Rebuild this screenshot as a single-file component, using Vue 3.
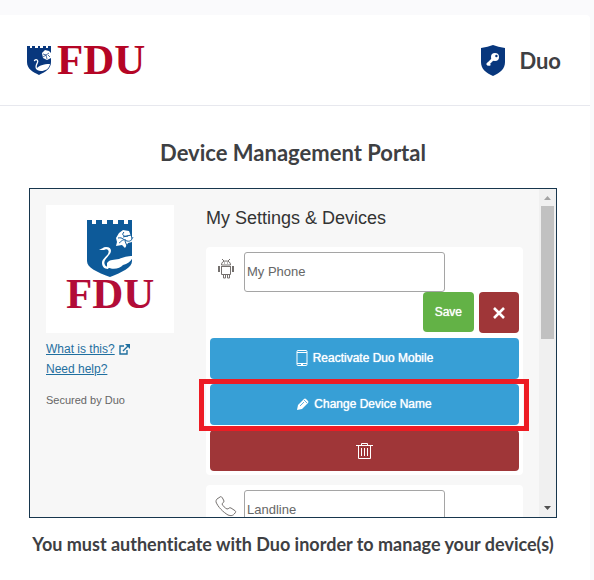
<script setup>
import { reactive } from 'vue'

const names = reactive({ phone: 'My Phone', landline: 'Landline' })
</script>

<template>
  <div class="page">
    <div class="card">
      <header class="header">
        <svg class="logo" viewBox="0 0 126 48" role="img" aria-label="FDU">
          <path fill="#08377d" d="M1 10h3v2h2v-2h3v2h3v-2h2v2h3v-2h3v2h2v-2h3v16c0 7-6 10-12 13C7 36 1 33 1 26z" />
          <path fill="none" stroke="#fff" stroke-width="1.300" stroke-linecap="round" d="M8.500 24.500c2-2 4 0 3 2s-3 5 0 7" />
          <path fill="#fff" d="M11 32c2-2 6-4 13-4-1 5-5 7-9 7-3 0-4-1-4-3z" />
          <path fill="#fff" d="M16 17l3-3 4 1 2 2v5l-4 2-4-2z" />
          <path fill="none" stroke="#08377d" stroke-width=".7" d="M17 18l3 1 3-2M17 21l3-2 1 4M22 19l2 2" />
          <text x="31" y="38" font-family="Liberation Serif, serif" font-weight="700" font-size="43" fill="#b50525">FDU</text>
        </svg>
        <div class="brand">
          <svg class="shield" viewBox="0 0 24 31" aria-hidden="true">
            <path fill="#08377d" d="M0 3Q7 2 12 0q5 2 12 3v14c0 7-5 11-12 14C5 28 0 24 0 17z" />
            <path fill="none" stroke="#fff" stroke-width="2.600" d="M12 14l-6 6" />
            <path fill="#fff" d="M7 17l3 3-2 1-2-2z" />
            <circle cx="14" cy="12" r="4" fill="#fff" />
            <circle cx="15.400" cy="11" r="1.200" fill="#08377d" />
          </svg>
          <span>Duo</span>
        </div>
      </header>

      <main class="content">
        <h1>Device Management Portal</h1>

        <section class="portal">
          <aside class="side">
            <svg class="crest" viewBox="0 0 128 128" role="img" aria-label="FDU">
              <path fill="#0d5a99" d="M41 15h5v4h4v-4h6v4h5v-4h6v4h5v-4h6v4h4v-4h4v41c0 7-10 11-22 16-13-5-23-9-23-16z" />
              <path fill="#fff" d="M53 45c3-1 4-3 7-3 6 0 6 5 3 8-3 4-6 6-4 10 1 2 3 2 5 1l-2 3c-4 0-6-3-6-6 0-4 4-6 6-9 2-4-1-6-4-4z" />
              <path fill="#fff" d="M61 58c3-4 7-3 12-4 5-2 8-3 14-3-1 4-3 6-7 8l-3 1c-3 4-11 5-16 2z" />
              <path fill="#fff" d="M70 33l3-5 4-3 6 1 2 5 1 6-4 1-3 5-3-3-6 1 1-4z" />
              <path fill="none" stroke="#0d5a99" d="M72 33c5-1 5 2 9 3s5-2 6-4M78 27c-3 3 0 5 4 4M80 35c-4-1-5 2-7 3M79 36l2 5M77 32l8-2" />
              <text x="20" y="103" font-family="Liberation Serif, serif" font-weight="700" font-size="43" fill="#b20c38">FDU</text>
            </svg>
            <nav class="links">
              <a href="#about">
                <span>What is this?</span>
                <svg class="external" viewBox="0 0 11 11" aria-hidden="true">
                  <path fill="none" stroke="currentColor" stroke-width="1.400" d="M5 2H1v8h7V6M4 7l5-5" />
                  <path fill="currentColor" d="M6 0h5v5z" />
                </svg>
              </a>
              <a href="#help"><span>Need help?</span></a>
            </nav>
            <p class="secured">Secured by Duo</p>
          </aside>

          <div class="devices">
            <h2>My Settings &amp; Devices</h2>

            <form class="device" @submit.prevent>
              <div class="name-row">
                <svg class="device-icon" viewBox="0 0 22 22" fill="none" stroke="#74706e" aria-hidden="true">
                  <path d="M6.500 8c0-3 2-4 4.500-4s4.500 1 4.500 4zM7 2l2 2M15 2l-2 2M6 9.500h10M6.500 9.500v8h9v-8M3.500 9v6M4.500 9v6M17.500 9v6M18.500 9v6M8.500 18v3h2v-3M12.500 18v3h2v-3" />
                  <path d="M9 6h1M12 6h1" />
                </svg>
                <input v-model="names.phone" type="text" aria-label="Phone name" />
              </div>
              <div class="confirm">
                <button class="save" type="submit">Save</button>
                <button class="cancel" type="button" aria-label="Cancel">
                  <svg viewBox="0 0 14 14" width="14" height="14" aria-hidden="true">
                    <path stroke="#fff" stroke-width="2.600" d="M2 2l10 10M12 2L2 12" />
                  </svg>
                </button>
              </div>
              <div class="actions">
                <button class="action" type="button">
                  <svg viewBox="0 0 12 16" width="12" height="16" fill="none" stroke="#fff" aria-hidden="true">
                    <rect x="1" y=".5" width="10" height="15" rx="1" />
                    <path d="M1 2.500h10M1 13.500h10" />
                    <path stroke-width="2" d="M5 14h2" />
                  </svg>
                  Reactivate Duo Mobile
                </button>
                <button class="action highlighted" type="button">
                  <svg viewBox="0 0 12 12" width="12" height="12" aria-hidden="true">
                    <path fill="#fff" d="M0 12l1-5 6-6q1-1 2 0l2 2q1 1 0 2l-6 6z" />
                    <path stroke="#379fd6" stroke-width=".8" d="M3 8l4-4M7 2l3 3" />
                  </svg>
                  Change Device Name
                </button>
                <button class="action danger" type="button" aria-label="Delete device">
                  <svg viewBox="0 0 17 17" width="17" height="17" fill="none" stroke="#fff" aria-hidden="true">
                    <path d="M0 3.500h17M5.500 3V1.500h6V3M2.500 4v12.500h12V4M5.500 6v8M8.500 6v8M11.500 6v8" />
                  </svg>
                </button>
              </div>
            </form>

            <form class="device" @submit.prevent>
              <div class="name-row">
                <svg class="device-icon" viewBox="0 0 22 22" fill="none" stroke="#74706e" aria-hidden="true">
                  <path d="M2 4l3-2c1-1 2 0 3 2l1 2c0 2-2 2-2 3 1 2 3 4 5 5 2 0 2-2 4-1l3 2c2 1 2 2 1 3-2 3-4 3-7 2C8 17 3 12 1 7c0-1 0-2 1-3z" />
                </svg>
                <input v-model="names.landline" type="text" aria-label="Landline name" />
              </div>
            </form>
          </div>

          <div class="scrollbar" aria-hidden="true">
            <svg viewBox="0 0 17 17"><path fill="#a3a3a3" d="M5 11h7L8.500 7z" /></svg>
            <div class="thumb"></div>
            <svg viewBox="0 0 17 17"><path fill="#505050" d="M5 6h7l-3.500 4z" /></svg>
          </div>
        </section>

        <p class="notice">You must authenticate with Duo inorder to manage your device(s)</p>
      </main>
    </div>
  </div>
</template>

<style>
body {
  margin: 0;
  background: #fafafc;
}
</style>

<style scoped>
* {
  box-sizing: border-box;
}

.page {
  min-height: 100vh;
  padding: 15px 4px 0 0;
  display: flex;
  font-family: Lato, sans-serif;
  font-variant-ligatures: none;
  color: #3e4043;
  background: #fafafc;
}

.card {
  flex: 1;
  min-width: 0;
  background: #fff;
  border-radius: 0 4px 0 0;
}

.header {
  height: 91px;
  padding: 0 29px 0 26px;
  display: flex;
  align-items: center;
  justify-content: space-between;
  border-bottom: 1px solid #e7e8ee;
}

.logo {
  width: 126px;
  height: 48px;
}

.brand {
  display: flex;
  align-items: center;
  gap: 14px;
  font-size: 22px;
  font-weight: 700;
}

.shield {
  width: 24px;
  height: 31px;
}

.content {
  padding: 32px 33px 24px 29px;
}

h1 {
  margin: 0 0 20px;
  font-size: 22px;
  line-height: 30px;
  font-weight: 700;
  text-align: center;
}

.portal {
  height: 330px;
  display: flex;
  overflow: hidden;
  border: 1px solid #17364d;
  background: #f7f7f7;
  font-family: "Liberation Sans", sans-serif;
}

.side {
  flex: none;
  width: 160px;
  padding: 16px;
}

.crest {
  display: block;
  width: 128px;
  height: 128px;
  background: #fff;
}

.links {
  margin-top: 6px;
  display: flex;
  flex-direction: column;
  align-items: flex-start;
  font-size: 12px;
  line-height: 20px;
}

.links a {
  display: flex;
  align-items: center;
  gap: 4px;
  color: #1f6f9f;
  text-decoration: none;
}

.links span {
  text-decoration: underline;
}

.external {
  width: 11px;
  height: 11px;
}

.secured {
  margin: 13px 0 0;
  font-size: 11px;
  line-height: 16px;
  color: #666;
}

.devices {
  flex: 1;
  min-width: 0;
  padding: 16px;
}

h2 {
  margin: 0 0 16px;
  font-size: 18px;
  line-height: 26px;
  font-weight: 400;
  color: #333;
}

.device {
  margin-bottom: 10px;
  padding: 5px 4px 4px;
  border-radius: 4px;
  background: #fff;
}

.name-row {
  display: flex;
  gap: 7px;
  padding-left: 5px;
}

.device-icon {
  flex: none;
  width: 22px;
  height: 22px;
  margin-top: 5px;
}

input {
  width: 201px;
  height: 40px;
  padding: 0 2px 2px;
  border: 1px solid #a5a5a5;
  border-radius: 3px;
  background: #fff;
  font-family: inherit;
  font-size: 13px;
  color: #666;
}

.confirm {
  display: flex;
  justify-content: flex-end;
  gap: 5px;
}

button {
  position: relative;
  display: flex;
  align-items: center;
  justify-content: center;
  gap: 5px;
  height: 41px;
  padding: 0 12px 1px;
  border: 0;
  border-radius: 4px;
  font-family: inherit;
  font-size: 12px;
  font-weight: 400;
  color: #fff;
  text-shadow: 0 0 1px #fff;
}

.save {
  height: 40px;
  background: #63b246;
}

.cancel {
  width: 40px;
  padding: 0;
  background: #9f3638;
}

.actions {
  margin-top: 5px;
  display: grid;
  gap: 5px;
}

.action {
  background: #379fd6;
}

.danger {
  background: #9f3638;
}

.highlighted {
  z-index: 1;
}

.highlighted::after {
  content: "";
  position: absolute;
  inset: -5px -10px -6px -11px;
  border: 5px solid #ed1c24;
}

.scrollbar {
  flex: none;
  width: 17px;
  display: flex;
  flex-direction: column;
  background: #f0f0f0;
}

.scrollbar svg {
  width: 17px;
  height: 17px;
}

.thumb {
  width: 13px;
  height: 133px;
  margin: 0 2px auto;
  background: #c1c1c1;
}

.notice {
  margin: 14px 0 0;
  font-size: 18px;
  line-height: 24px;
  font-weight: 700;
  text-align: center;
}
</style>
